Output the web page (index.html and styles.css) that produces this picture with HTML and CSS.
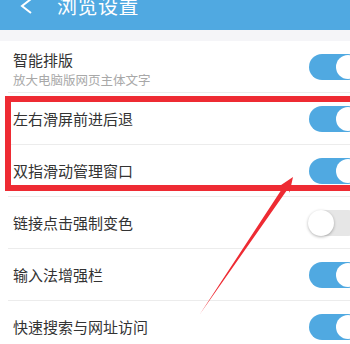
FILE: index.html
```html
<!DOCTYPE html>
<html lang="zh">
<head>
<meta charset="utf-8">
<link rel="stylesheet" href="styles.css">
</head>
<body>
<div class="screen">
  <header class="topbar">
    <svg class="back" width="14" height="16" viewBox="0 0 14 16"><polyline points="11,0 2,7 11,14" fill="none" stroke="#fff" stroke-width="2"/></svg>
    <span class="title">浏览设置</span>
  </header>
  <div class="gap"></div>
  <div class="list">
    <div class="row tall">
      <div class="texts">
        <div class="label">智能排版</div>
        <div class="sub">放大电脑版网页主体文字</div>
      </div>
      <div class="toggle on"><span class="knob"></span></div>
    </div>
    <div class="row">
      <div class="label">左右滑屏前进后退</div>
      <div class="toggle on"><span class="knob"></span></div>
    </div>
    <div class="row">
      <div class="label">双指滑动管理窗口</div>
      <div class="toggle on"><span class="knob"></span></div>
    </div>
    <div class="row">
      <div class="label">链接点击强制变色</div>
      <div class="toggle off"><span class="knob"></span></div>
    </div>
    <div class="row">
      <div class="label">输入法增强栏</div>
      <div class="toggle on"><span class="knob"></span></div>
    </div>
    <div class="row">
      <div class="label">快速搜索与网址访问</div>
      <div class="toggle on"><span class="knob"></span></div>
    </div>
  </div>
  <div class="highlight"></div>
  <svg class="arrow" width="350" height="344" viewBox="0 0 350 344">
    <polygon points="200,314 288.3,188.3 289.5,192.8 293,177 279.6,186 284.2,185.5" fill="#ee2b33"/>
  </svg>
</div>
</body>
</html>
```
FILE: styles.css
```css
html, body {
  margin: 0;
  padding: 0;
  background: #fff;
}
body {
  width: 350px;
  height: 344px;
  overflow: hidden;
  font-family: "Noto Sans CJK SC", "Noto Sans", sans-serif;
}
.screen {
  position: relative;
  width: 350px;
  height: 344px;
  overflow: hidden;
}
.topbar {
  height: 30px;
  background: #50a9e1;
  display: flex;
  align-items: flex-start;
  color: #fff;
}
.back {
  margin-left: 20px;
  margin-top: -1px;
}
.title {
  margin-left: 23px;
  margin-top: -6px;
  font-size: 20px;
  line-height: 24px;
  letter-spacing: 0.5px;
}
.gap {
  height: 11px;
  background: #f5f5f8;
}
.list {
  display: flex;
  flex-direction: column;
}
.row {
  height: 51px;
  margin-left: 8px;
  padding-left: 5px;
  border-bottom: 1px solid #ececec;
  display: flex;
  align-items: center;
  justify-content: space-between;
}
.row.tall {
  height: 51px;
}
.texts {
  display: flex;
  flex-direction: column;
  padding-top: 6px;
}
.label {
  font-size: 15px;
  line-height: 18px;
  color: #333;
}
.sub {
  font-size: 12.5px;
  line-height: 16px;
  color: #a8a8a8;
  margin-top: 3px;
}
.toggle {
  width: 52px;
  height: 26px;
  border-radius: 13px;
  margin-right: -11px;
  display: flex;
  align-items: center;
  box-sizing: border-box;
}
.toggle.on {
  background: #50a9e1;
  justify-content: flex-end;
  padding-right: 1px;
}
.toggle.on .knob {
  width: 24px;
  height: 24px;
  border-radius: 50%;
  background: #fff;
}
.toggle.off {
  background: #e6e6e6;
  justify-content: flex-start;
}
.toggle.off .knob {
  width: 26px;
  height: 26px;
  border-radius: 50%;
  background: #fff;
  margin-left: -1px;
  box-shadow: 0 1px 3px rgba(0,0,0,0.3);
}
.highlight {
  position: absolute;
  left: 5px;
  top: 96px;
  width: 360px;
  height: 95px;
  border: 6px solid #ee2b33;
  box-sizing: border-box;
}
.arrow {
  position: absolute;
  left: 0;
  top: 0;
  pointer-events: none;
}
```
